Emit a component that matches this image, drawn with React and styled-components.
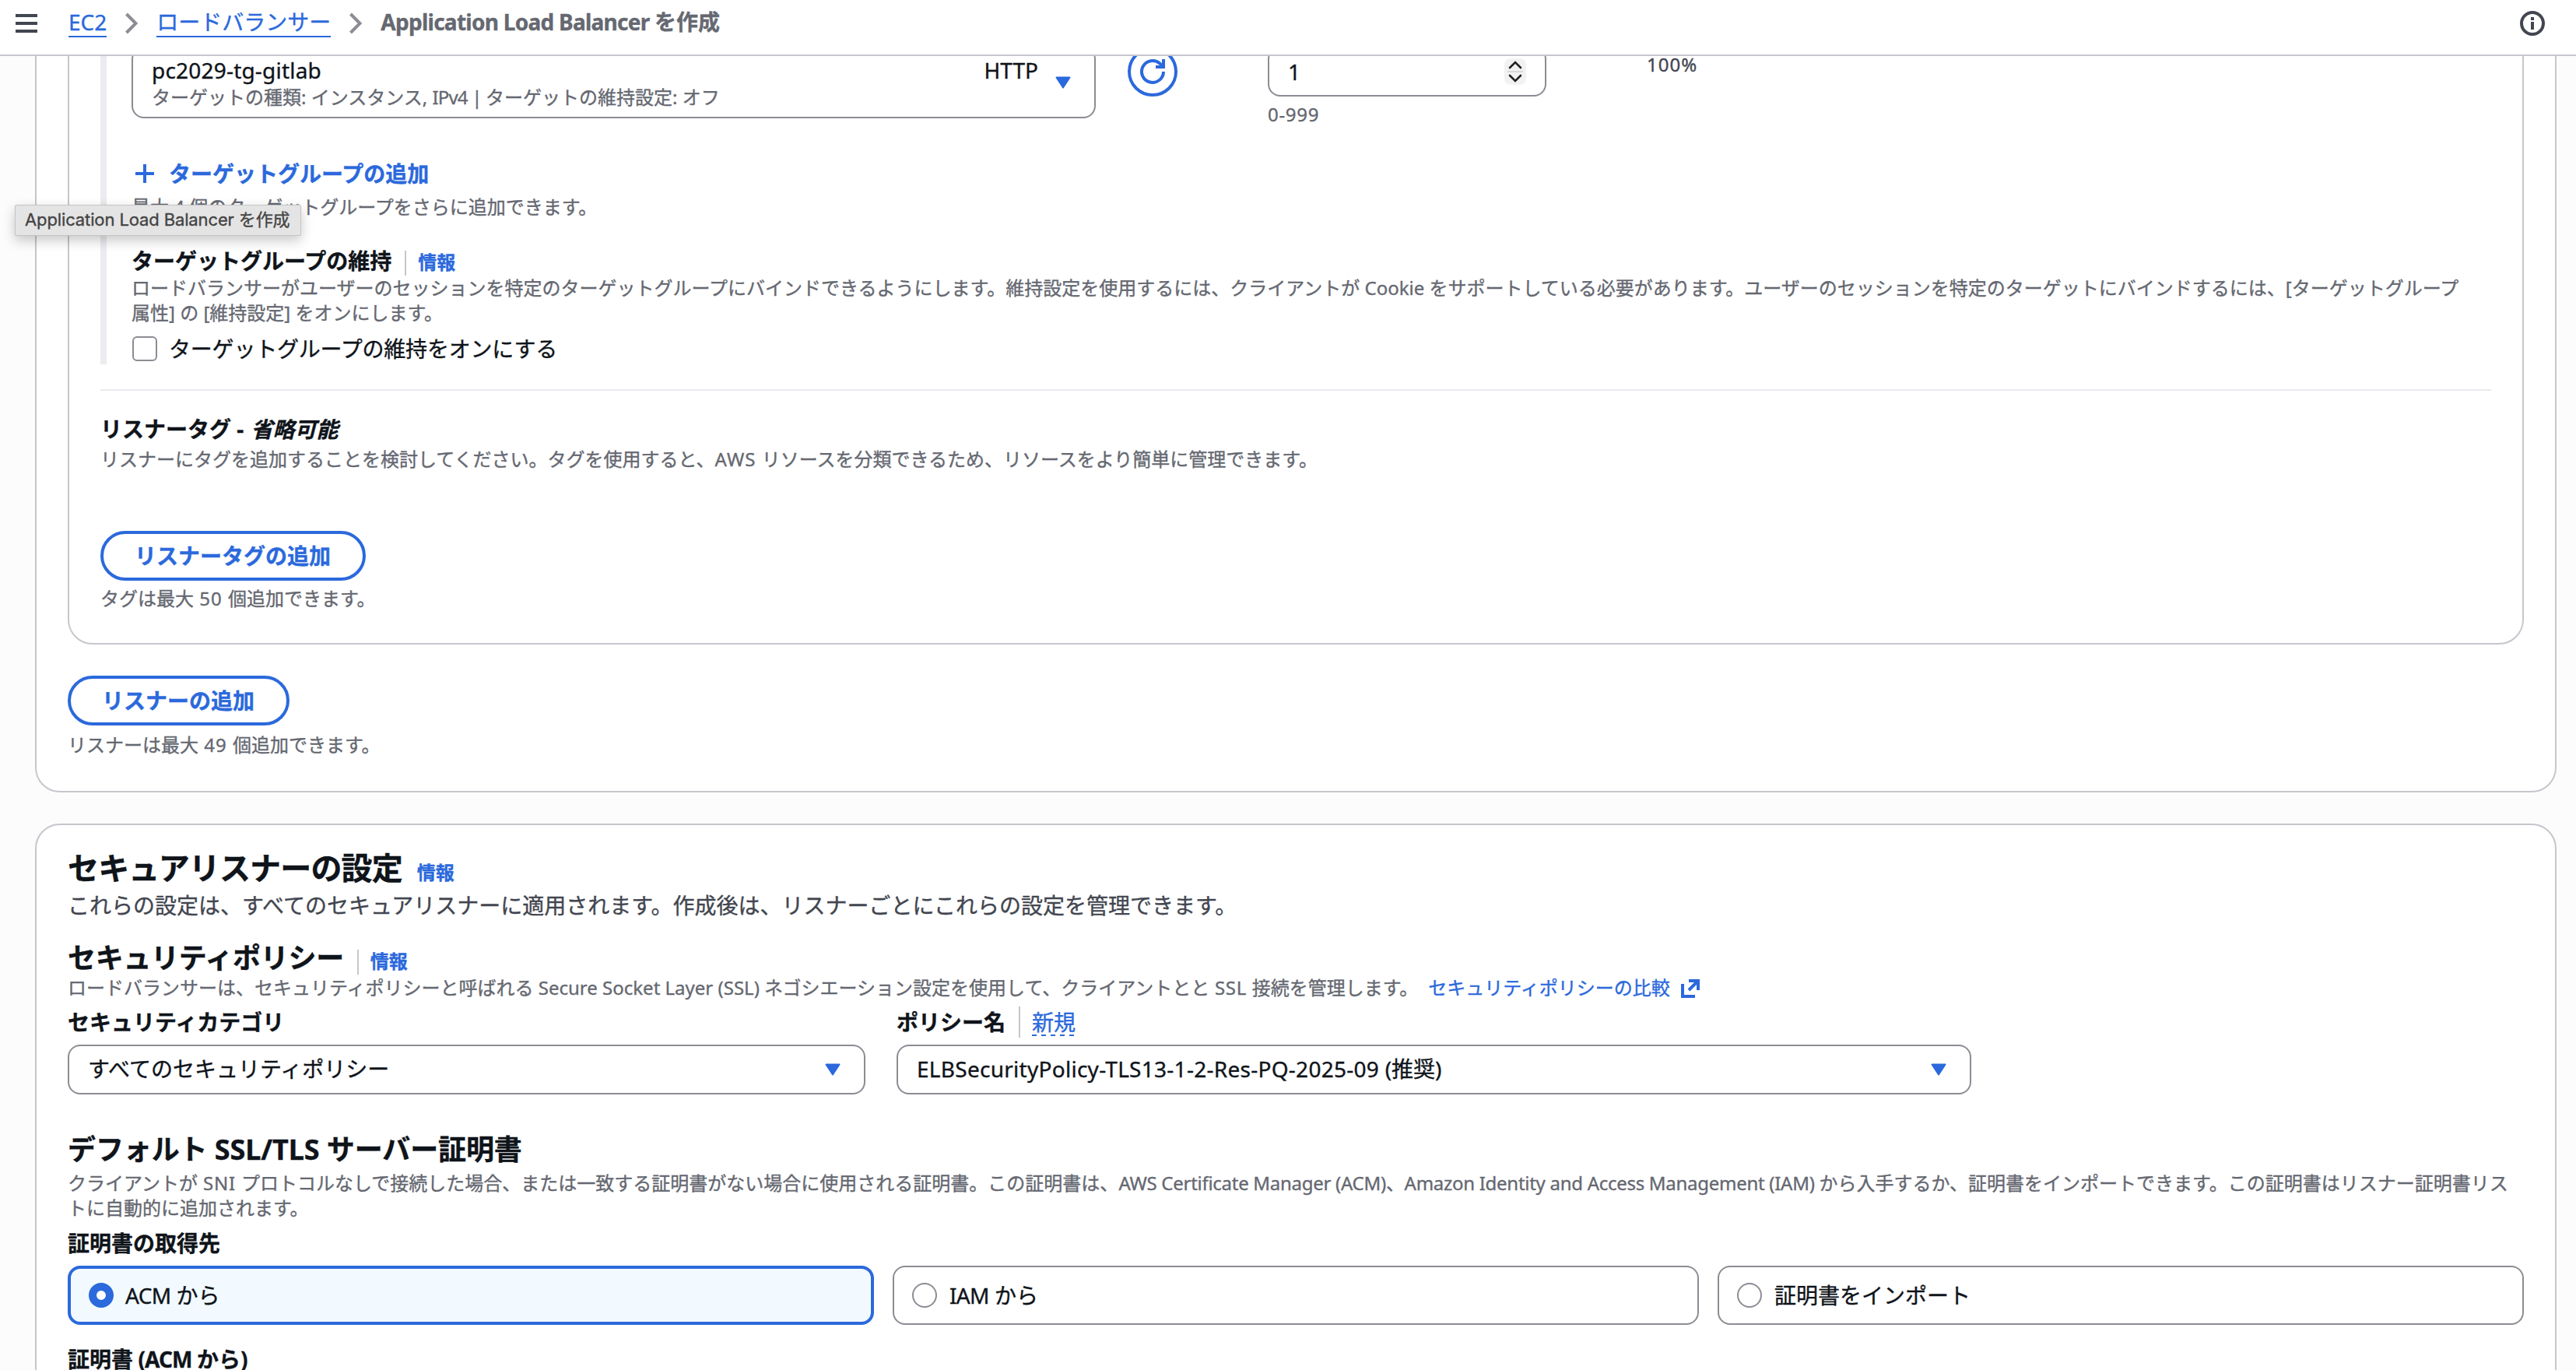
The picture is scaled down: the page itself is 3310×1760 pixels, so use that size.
import React from "react";
import styled, { createGlobalStyle } from "styled-components";

const blue = "#2b69dc";
const ink = "#0f141a";
const grey = "#656871";
const edge = "#8c8c94";
const cardEdge = "#c6c6cd";

const GlobalStyle = createGlobalStyle`
    * {
        box-sizing: border-box;
    }
    html, body {
        margin: 0;
        background: #fcfcfd;
    }
    body {
        font-family: "Noto Sans", "Noto Sans CJK JP", sans-serif;
        font-size: 28px;
        line-height: 40px;
        color: ${ink};
        -webkit-text-stroke: 0.35px;
    }
`;

const Page = styled.div`
    display: flex;
    flex-direction: column;
    height: 1760px;
    overflow: hidden;
`;

const TopBar = styled.header`
    display: flex;
    align-items: flex-start;
    flex: none;
    height: 72px;
    padding: 10px 40px 0 20px;
    background: #fff;
    border-bottom: 2px solid ${cardEdge};
    line-height: 36px;
    white-space: nowrap;
`;

const MenuIcon = styled.svg`
    width: 28px;
    height: 24px;
    margin: 8px 40px 0 0;
`;

const Crumb = styled.a`
    color: ${blue};
    border-bottom: 2px solid ${blue};
`;

const CurrentCrumb = styled.span`
    color: ${grey};
    font-weight: 700;
`;

// latin runs inside the japanese text
const En = styled.span`
    letter-spacing: ${(p) => p.$spacing}px;
`;

const Chevron = styled.svg`
    width: 16px;
    height: 28px;
    margin: 6px 24px 0;
`;

const InfoIcon = styled.svg`
    width: 32px;
    height: 32px;
    margin: 4px 0 0 auto;
`;

const Main = styled.main`
    flex: 1;
    min-height: 0;
    padding: 0 25px 0 45px;
    overflow: hidden;
`;

const Card = styled.section`
    border: 2px solid ${cardEdge};
    border-radius: 32px;
    background: #fff;
    padding: ${(p) => p.$padding};
    margin-bottom: 40px;
`;

// the part of the card above the fold is scrolled away under the top bar
const ScrolledCard = styled(Card)`
    margin-top: -62px;
`;

const ListenerCard = styled(Card)`
    margin-bottom: 40px;
    padding: 46px 40px 40px;
`;

const Action = styled.div`
    border-left: 8px solid #ebebf0;
    padding-left: 32px;
    padding-right: 33px;
`;

const TargetRow = styled.div`
    display: flex;
    align-items: flex-start;
`;

const SelectBox = styled.div`
    display: flex;
    align-items: center;
    justify-content: space-between;
    flex: none;
    width: ${(p) => p.$width}px;
    height: ${(p) => p.$height || 64}px;
    padding: 0 30px 2px 24px;
    border: 2px solid ${edge};
    border-radius: 16px;
    background: #fff;
    white-space: nowrap;
`;

const TargetOption = styled.div`
    flex: 1;
    margin-right: 22px;
`;

const OptionLine = styled.div`
    display: flex;
    justify-content: space-between;
`;

const OptionMeta = styled.div`
    margin-top: -1px;
    color: ${grey};
    font-size: 24px;
    line-height: 32px;
`;

const CaretIcon = styled.svg`
    width: 20px;
    height: 16px;
    flex: none;
    margin-top: 2px;
`;

const RoundButton = styled.button`
    display: flex;
    align-items: center;
    justify-content: center;
    width: 64px;
    height: 64px;
    margin: 0 116px 0 41px;
    padding: 0;
    border: 4px solid ${blue};
    border-radius: 50%;
    background: #fff;
`;

const NumberBox = styled.div`
    display: flex;
    align-items: center;
    justify-content: space-between;
    width: 358px;
    height: 64px;
    padding: 0 24px;
    border: 2px solid ${edge};
    border-radius: 16px;
`;

const Stepper = styled.svg`
    width: 28px;
    height: 34px;
`;

const Percent = styled.div`
    margin-left: 129px;
    padding-top: 7px;
    color: #424650;
    font-size: 24px;
    line-height: 32px;
    letter-spacing: 1px;
`;

const Hint = styled.p`
    margin: ${(p) => p.$top || 0}px 0 0;
    padding-bottom: 1px;
    color: ${grey};
    font-size: 24px;
    line-height: 32px;
`;

const AddLink = styled.a`
    display: flex;
    align-items: center;
    gap: 19px;
    margin-top: 39px;
    padding-left: 5px;
    color: ${blue};
    font-weight: 700;
`;

const LabelRow = styled.div`
    display: flex;
    align-items: center;
    margin-top: ${(p) => p.$top || 0}px;
    padding-bottom: 1px;
    font-weight: 700;
`;

const Rule = styled.span`
    width: 2px;
    height: ${(p) => p.$height || 32}px;
    margin: ${(p) => p.$down || 0}px 15px 0 17px;
    background: ${cardEdge};
`;

const InfoLink = styled.a`
    color: ${blue};
    font-size: 24px;
    font-weight: 700;
    line-height: 32px;
    margin-top: ${(p) => p.$down || 3}px;
    margin-left: ${(p) => p.$left || 0}px;
`;

const NewLink = styled.a`
    color: ${blue};
    font-weight: 400;
    line-height: 36px;
    background: repeating-linear-gradient(90deg, ${blue} 0 6px, transparent 6px 12px) left bottom / 100% 2px no-repeat;
`;

const CheckRow = styled.label`
    display: flex;
    align-items: center;
    gap: 15px;
    margin: 9px 0 0 1px;
    letter-spacing: -0.2px;
`;

const CheckBox = styled.span`
    width: 32px;
    height: 32px;
    border: 2px solid ${edge};
    border-radius: 6px;
`;

const Divider = styled.hr`
    height: 2px;
    margin: 32px 0 29px;
    border: 0;
    background: #ebebf0;
`;

const PillButton = styled.button`
    display: block;
    height: 64px;
    margin-top: ${(p) => p.$top || 0}px;
    padding: 0 41px 1px 40px;
    border: 4px solid ${blue};
    border-radius: 32px;
    background: #fff;
    color: ${blue};
    font: inherit;
    font-weight: 700;
`;

const SectionTitle = styled.h2`
    margin: 0;
    font-size: 40px;
    line-height: 48px;
    letter-spacing: -0.85px;
`;

const SubTitle = styled.h3`
    margin: 0;
    font-size: 36px;
    line-height: 44px;
    letter-spacing: ${(p) => p.$spacing}px;
`;

const TitleRow = styled.div`
    display: flex;
    align-items: center;
    margin-top: ${(p) => p.$top || 0}px;
`;

const Lead = styled.p`
    margin: 4px 0 0;
    padding-bottom: 1px;
    color: #424650;
`;

const ExternalLink = styled.a`
    color: ${blue};
    margin-left: 13px;

    svg {
        width: 24px;
        height: 24px;
        margin-left: 14px;
        vertical-align: -4px;
    }
`;

const PolicyFields = styled.div`
    display: flex;
    gap: 40px;
    margin-top: 7px;
`;

const Field = styled.div`
    display: flex;
    flex-direction: column;
    gap: 8px;
`;

const Tiles = styled.div`
    display: grid;
    grid-template-columns: repeat(3, 1fr);
    gap: 24px;
    margin-top: 8px;
`;

const Tile = styled.label`
    display: flex;
    align-items: center;
    gap: ${(p) => (p.$selected ? 15 : 16)}px;
    height: 76px;
    padding: 0 23px 1px;
    border: ${(p) => (p.$selected ? `4px solid ${blue}` : `2px solid ${edge}`)};
    border-radius: 16px;
    background: ${(p) => (p.$selected ? "#f2faff" : "#fff")};
`;

const Radio = styled.span`
    width: 32px;
    height: 32px;
    border: ${(p) => (p.$selected ? `10px solid ${blue}` : `2px solid ${edge}`)};
    border-radius: 50%;
    background: #fff;
`;

const Tooltip = styled.div`
    position: absolute;
    left: 19px;
    top: 263px;
    width: 368px;
    height: 40px;
    padding-left: 12px;
    border: 1px solid #c4c4c4;
    border-radius: 2px;
    background: #e4e4e4;
    box-shadow: 0 6px 16px rgba(0, 0, 0, 0.22);
    color: #444;
    font-family: Inter, "Noto Sans CJK JP", sans-serif;
    font-size: 22px;
    line-height: 37px;
    letter-spacing: -0.12px;
    white-space: nowrap;
`;

const Caret = () => (
    <CaretIcon viewBox="0 0 20 16">
        <path d="M1.5 1.5h17L10 14.5z" fill={blue} stroke={blue} strokeWidth="2" strokeLinejoin="round" />
    </CaretIcon>
);

const Separator = () => (
    <Chevron viewBox="0 0 16 28">
        <path d="M1.5 2l12 12-12 12" fill="none" stroke={edge} strokeWidth="4" />
    </Chevron>
);

const sources = [
    { en: "ACM", ja: " から" },
    { en: "IAM", ja: " から" },
    { en: "", ja: "証明書をインポート" },
];

export default function App() {
    return (
        <Page>
            <GlobalStyle />
            <TopBar>
                <MenuIcon viewBox="0 0 28 24">
                    <path d="M0 2h28M0 12h28M0 22h28" stroke="#424650" strokeWidth="4" />
                </MenuIcon>
                <Crumb>EC2</Crumb>
                <Separator />
                <Crumb>ロードバランサー</Crumb>
                <Separator />
                <CurrentCrumb>
                    <En $spacing={-0.73}>Application Load Balancer </En>を作成
                </CurrentCrumb>
                <InfoIcon viewBox="0 0 32 32">
                    <circle cx="16" cy="16" r="14" fill="none" stroke="#424650" strokeWidth="4" />
                    <path d="M16 8v4M16 14v10" stroke="#424650" strokeWidth="4" />
                </InfoIcon>
            </TopBar>

            <Main>
                <ScrolledCard $padding="0 40px 42px">
                    <ListenerCard>
                        <Action>
                            <TargetRow>
                                <SelectBox $width={1239} $height={92}>
                                    <TargetOption>
                                        <OptionLine>
                                            <En $spacing={0.2}>pc2029-tg-gitlab</En>
                                            <span>HTTP</span>
                                        </OptionLine>
                                        <OptionMeta>
                                            ターゲットの種類: インスタンス, <En $spacing={-0.8}>IPv4 | </En>ターゲットの維持設定: オフ
                                        </OptionMeta>
                                    </TargetOption>
                                    <Caret />
                                </SelectBox>
                                <RoundButton>
                                    <svg width="32" height="32" viewBox="0 0 32 32">
                                        <path
                                            d="M30 16a14 14 0 1 1-4.5-10.3L29 9.5M30 0v10H20"
                                            fill="none"
                                            stroke={blue}
                                            strokeWidth="4"
                                        />
                                    </svg>
                                </RoundButton>
                                <div>
                                    <NumberBox>
                                        <span>1</span>
                                        <Stepper viewBox="0 0 28 34">
                                            <rect width="28" height="34" rx="8" fill="#f2f2f2" />
                                            <path d="M4 17h20" stroke="#d9d9d9" strokeWidth="2" />
                                            <path
                                                d="M7 12l7-7 7 7M7 22l7 7 7-7"
                                                fill="none"
                                                stroke="#222"
                                                strokeWidth="2.6"
                                                strokeLinecap="round"
                                            />
                                        </Stepper>
                                    </NumberBox>
                                    <Hint $top={7}>
                                        <En $spacing={0.7}>0-999</En>
                                    </Hint>
                                </div>
                                <Percent>100%</Percent>
                            </TargetRow>

                            <AddLink>
                                <svg width="24" height="24" viewBox="0 0 24 24">
                                    <path d="M12 0v24M0 12h24" stroke={blue} strokeWidth="4" />
                                </svg>
                                ターゲットグループの追加
                            </AddLink>
                            <Hint $top={7}>最大 4 個のターゲットグループをさらに追加できます。</Hint>

                            <LabelRow $top={32}>
                                ターゲットグループの維持
                                <Rule $down={6} />
                                <InfoLink>情報</InfoLink>
                            </LabelRow>
                            <Hint $top={-2}>
                                ロードバランサーがユーザーのセッションを特定のターゲットグループにバインドできるようにします。維持設定を使用するには、クライアントが Cookie をサポートしている必要があります。ユーザーのセッションを特定のターゲットにバインドするには、[ターゲットグループ属性] の [維持設定] をオンにします。
                            </Hint>
                            <CheckRow>
                                <CheckBox />
                                ターゲットグループの維持をオンにする
                            </CheckRow>
                        </Action>

                        <Divider />

                        <LabelRow>
                            <span>
                                リスナータグ <En $spacing={1}>- </En><i>省略可能</i>
                            </span>
                        </LabelRow>
                        <Hint $top={2}>
                            リスナーにタグを追加することを検討してください。タグを使用すると、<En $spacing={1}>AWS </En>リソースを分類できるため、リソースをより簡単に管理できます。
                        </Hint>
                        <PillButton $top={75}>リスナータグの追加</PillButton>
                        <Hint $top={7}>
                            タグは最大<En $spacing={1}> 50 </En>個追加できます。
                        </Hint>
                    </ListenerCard>

                    <PillButton>リスナーの追加</PillButton>
                    <Hint $top={9}>
                        リスナーは最大<En $spacing={1}> 49 </En>個追加できます。
                    </Hint>
                </ScrolledCard>

                <Card $padding="31px 40px 42px">
                    <TitleRow>
                        <SectionTitle>セキュアリスナーの設定</SectionTitle>
                        <InfoLink $left={19} $down={12}>情報</InfoLink>
                    </TitleRow>
                    <Lead>これらの設定は、すべてのセキュアリスナーに適用されます。作成後は、リスナーごとにこれらの設定を管理できます。</Lead>

                    <TitleRow $top={25}>
                        <SubTitle $spacing={-0.3}>セキュリティポリシー</SubTitle>
                        <Rule $down={10} />
                        <InfoLink $down={8}>情報</InfoLink>
                    </TitleRow>
                    <Hint>
                        ロードバランサーは、セキュリティポリシーと呼ばれる Secure Socket Layer (SSL) ネゴシエーション設定を使用して、クライアントとと<En $spacing={0.6}> SSL </En>接続を管理します。
                        <ExternalLink>
                            セキュリティポリシーの比較
                            <svg viewBox="0 0 24 24">
                                <path d="M10 2h12v12M22 2L10 14M2 6v16h16" fill="none" stroke={blue} strokeWidth="4" />
                            </svg>
                        </ExternalLink>
                    </Hint>

                    <PolicyFields>
                        <Field>
                            <LabelRow>セキュリティカテゴリ</LabelRow>
                            <SelectBox $width={1025}>
                                すべてのセキュリティポリシー
                                <Caret />
                            </SelectBox>
                        </Field>
                        <Field>
                            <LabelRow>
                                ポリシー名
                                <Rule $height={40} />
                                <NewLink>新規</NewLink>
                            </LabelRow>
                            <SelectBox $width={1381}>
                                <span>
                                    <En $spacing={0.27}>ELBSecurityPolicy-TLS13-1-2-Res-PQ-2025-09 </En>(推奨)
                                </span>
                                <Caret />
                            </SelectBox>
                        </Field>
                    </PolicyFields>

                    <TitleRow $top={49}>
                        <SubTitle $spacing={-0.1}>デフォルト SSL/TLS サーバー証明書</SubTitle>
                    </TitleRow>
                    <Hint $top={5}>
                        クライアントが<En $spacing={0.8}> SNI </En>プロトコルなしで接続した場合、または一致する証明書がない場合に使用される証明書。この証明書は、<En $spacing={-0.28}>AWS Certificate Manager (ACM)、Amazon Identity and Access Management (IAM) </En>から入手するか、証明書をインポートできます。この証明書はリスナー証明書リストに自動的に追加されます。
                    </Hint>
                    <LabelRow $top={8}>証明書の取得先</LabelRow>
                    <Tiles>
                        {sources.map((source, i) => (
                            <Tile key={i} $selected={i === 0}>
                                <Radio $selected={i === 0} />
                                <span>
                                    <En $spacing={-0.7}>{source.en}</En>
                                    {source.ja}
                                </span>
                            </Tile>
                        ))}
                    </Tiles>
                    <LabelRow $top={24}>
                        <span>
                            証明書<En $spacing={-0.9}> (ACM </En>から)
                        </span>
                    </LabelRow>
                </Card>
            </Main>

            <Tooltip>Application Load Balancer を作成</Tooltip>
        </Page>
    );
}
